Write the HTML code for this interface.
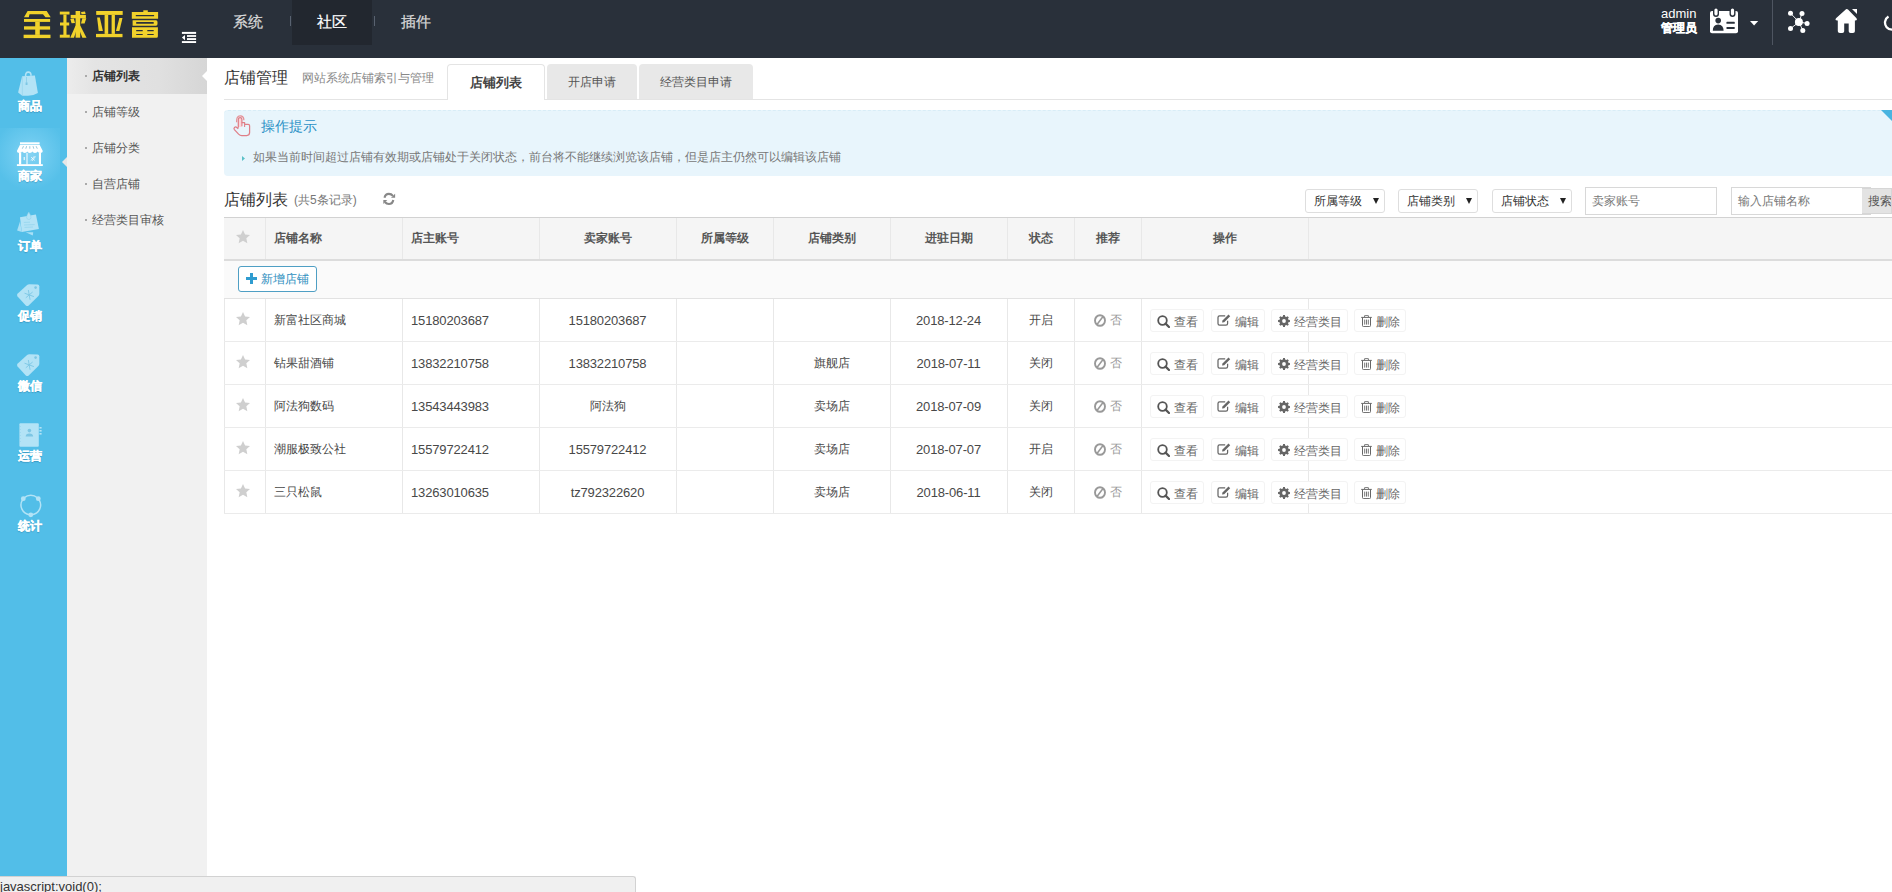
<!DOCTYPE html>
<html><head><meta charset="utf-8">
<style>
*{box-sizing:border-box;margin:0;padding:0}
html,body{width:1892px;height:892px;overflow:hidden;background:#fff;font-family:"Liberation Sans",sans-serif;font-size:12px;color:#333}
.a{position:absolute}
#hd{left:0;top:0;width:1892px;height:58px;background:#29303a}
#sb{left:0;top:58px;width:67px;height:834px;background:#52bee8}
#sm{left:67px;top:58px;width:140px;height:834px;background:#f1f1f1}
.nav{position:absolute;top:0;height:45px;line-height:44px;font-size:15px;color:#d8d8d8;text-align:center;-webkit-text-stroke:0.25px currentColor}
.sep{position:absolute;width:1px;height:10px;top:16px;background:#596270}
.sl{position:absolute;left:0;width:59px;text-align:center;font-size:12px;font-weight:bold;color:#fff;line-height:12px;-webkit-text-stroke:0.35px #fff;text-shadow:0 1px 1px rgba(0,60,100,.35)}
.ic{position:absolute}
.smi{position:absolute;left:0;width:140px;height:36px;line-height:36px;font-size:12px;color:#555;padding-left:25px}
.smi:before{content:"";position:absolute;left:18px;top:17px;width:2px;height:2px;background:#aaa}

.tab{position:absolute;top:64px;height:35px;line-height:36px;text-align:center;font-size:12px;color:#555;background:#e8e8e8;border-radius:4px 4px 0 0}
.sel{position:absolute;top:189px;width:80px;height:24px;border:1px solid #dedede;border-radius:3px;background:#fff;font-size:12px;line-height:22px;color:#333;padding-left:8px}
.sel i{position:absolute;left:67px;top:8px;width:0;height:0;border-left:3px solid transparent;border-right:3px solid transparent;border-top:6px solid #222}
.inp{position:absolute;top:187px;height:28px;border:1px solid #d8d8d8;background:#fff;font-size:12px;line-height:26px;color:#777;padding-left:6px}
.th{position:absolute;top:218px;height:41px;line-height:40px;font-size:12px;font-weight:bold;color:#555}
.vl{position:absolute;width:1px;background:#e8e8e8}
.td{position:absolute;height:43px;line-height:43px;font-size:12px;color:#484848;white-space:nowrap}
.rl{position:absolute;left:224px;width:1668px;height:1px;background:#ebebeb}
.btn{position:absolute;height:23px;border:1px solid #f3f3f3;border-radius:3px;background:#fff;font-size:12px;line-height:21px;color:#666;white-space:nowrap}
.num{font-size:13px;letter-spacing:-0.15px}
</style></head><body>
<div id="hd" class="a">
  <svg class="ic" style="left:0;top:0" width="170" height="45" viewBox="0 0 170 45"><g fill="#f1d22b">
    <path d="M27.6 10.9 H46.7 L50.7 17.3 H45.5 L43 14.3 H29.5 L28.8 17.3 H24Z"/>
    <rect x="24" y="19" width="26.1" height="2.9"/><rect x="35.2" y="21.9" width="4.6" height="13"/><rect x="24" y="26.3" width="26.1" height="3.3"/><rect x="23.6" y="34.7" width="26.9" height="3.4"/>
    <rect x="59.8" y="11.6" width="9.7" height="2.9"/><rect x="63.4" y="14.5" width="3.1" height="20.5"/><rect x="60" y="22.5" width="9.2" height="3"/><rect x="59.8" y="34.7" width="10" height="3"/>
    <path d="M75.6 11 H80.2 V37.7 H75.6Z"/><rect x="70.7" y="14.9" width="15.2" height="3.4"/>
    <path d="M81 12 L85 11.4 L85.6 14 L81.6 14.3Z"/><path d="M70.3 19 L73.8 18.6 L75 23 L71.6 23.3Z"/><path d="M82.3 18.3 H86.3 L84.6 23.6 H81Z"/>
    <path d="M75.6 25.5 L77.4 27.5 L74 37.7 H70.2Z"/><path d="M80.2 25.5 L86.5 37.7 H82.4 L78.5 28Z"/>
    <rect x="96.2" y="11" width="26.5" height="3.9"/><rect x="104.6" y="14.9" width="3.6" height="19"/><rect x="111.6" y="14.9" width="3.3" height="19"/>
    <path d="M97.1 17.5 H99.8 L102.9 30.9 H98.7Z"/><path d="M119.4 18.1 H122.5 L119.4 30.9 H116Z"/><rect x="96" y="33.9" width="26.5" height="3.3"/>
    <rect x="143.3" y="10.3" width="4.5" height="2.2"/>
    <path d="M131.8 12 H158.1 V18.7 H131.8Z M135.8 15 V16.2 H154.1 V15Z" fill-rule="evenodd"/>
    <path d="M132.6 20.2 H156 Q157.5 20.2 157.5 22 V24 Q157.5 25.7 156 25.7 H132.6Z M136.2 22.1 V23.8 H153.7 V22.1Z" fill-rule="evenodd"/>
    <path d="M132 27.2 H157.9 V36.2 Q157.9 37.7 156.4 37.7 H132Z M136.2 30.1 V31.2 H142.7 V30.1Z M147.3 30.1 V31.2 H153.7 V30.1Z M136.2 34.1 V35.1 H142.7 V34.1Z M147.3 34.1 V35.1 H153.7 V34.1Z" fill-rule="evenodd"/>
  </g></svg>
  <svg class="ic" style="left:176px;top:26px" width="26" height="22" viewBox="0 0 26 22"><g fill="#fff"><rect x="5.9" y="5.9" width="14.2" height="2"/><rect x="11" y="9.1" width="9.1" height="1.8"/><rect x="11" y="12.1" width="9.1" height="1.9"/><rect x="5.9" y="15.1" width="14.2" height="1.9"/><path d="M5.9 11.5 L9 9 V14.2Z"/></g></svg>
  <div class="nav" style="left:218px;width:60px">系统</div>
  <div class="sep" style="left:290px"></div>
  <div class="nav" style="left:292px;width:80px;background:#22272f;color:#fff">社区</div>
  <div class="sep" style="left:374px"></div>
  <div class="nav" style="left:386px;width:60px">插件</div>
  <div class="a" style="left:1661px;top:7px;font-size:13px;line-height:14px;color:#fff">admin</div>
  <div class="a" style="left:1661px;top:21px;font-size:12px;line-height:14px;color:#fff;font-weight:bold;-webkit-text-stroke:0.3px #fff">管理员</div>
  <svg class="ic" style="left:1708px;top:7px" width="32" height="28" viewBox="0 0 32 28">
    <rect x="2" y="4" width="28" height="22.2" rx="2" fill="#fff"/>
    <rect x="5" y="0.5" width="6" height="9.5" rx="3" fill="#29303a"/><rect x="6.4" y="1.4" width="3.2" height="7" rx="1.6" fill="#fff"/>
    <rect x="21.5" y="0.5" width="6" height="9.5" rx="3" fill="#29303a"/><rect x="22.9" y="1.4" width="3.2" height="7" rx="1.6" fill="#fff"/>
    <circle cx="10.2" cy="13.6" r="2.8" fill="#29303a"/><path d="M4.8 23.8 Q4.6 18.2 10.2 17.6 Q15.6 18.2 15.6 23.8Z" fill="#29303a"/>
    <rect x="18.4" y="14.8" width="8.4" height="2" rx="0.6" fill="#29303a"/><rect x="18.4" y="19.9" width="8.4" height="2" rx="0.6" fill="#29303a"/>
  </svg>
  <svg class="ic" style="left:1750px;top:21px" width="9" height="5" viewBox="0 0 9 5"><path d="M0 0 H8.2 L4.1 4.4Z" fill="#fff"/></svg>
  <div class="a" style="left:1772px;top:0;width:1px;height:45px;background:#4e5561"></div>
  <svg class="ic" style="left:1780px;top:5px" width="112" height="35" viewBox="0 0 112 35">
    <g stroke="#fff" stroke-width="0.9"><line x1="19" y1="17" x2="10.5" y2="8.3"/><line x1="19" y1="17" x2="22" y2="8.4"/><line x1="19" y1="17" x2="27.1" y2="18.4"/><line x1="19" y1="17" x2="10.5" y2="23.6"/><line x1="19" y1="17" x2="22.8" y2="25.5"/></g>
    <circle cx="18.9" cy="16.9" r="4" fill="#fff"/><circle cx="10.5" cy="8.3" r="2.5" fill="#fff"/><circle cx="22" cy="8.4" r="2.5" fill="#fff"/><circle cx="27.1" cy="18.4" r="2.5" fill="#fff"/><circle cx="10.5" cy="23.6" r="2.5" fill="#fff"/><circle cx="22.8" cy="25.5" r="2.5" fill="#fff"/>
    <path d="M66 4.3 Q67 3.5 68 4.5 L76.5 13.2 Q77.7 15.4 75.3 15.4 L74.9 15.4 V26.2 Q74.9 28 73 28 H70.6 Q68.7 28 68.7 26.2 V18.4 H64.2 V26.2 Q64.2 28 62.3 28 H59.8 Q57.8 28 57.8 26.2 V15.4 H57.2 Q54.6 15.4 56 13.2Z" fill="#fff"/>
    <path d="M72 4.1 H77 V8.9Z" fill="#fff"/>
    <path d="M108.5 11.6 A7 7 0 1 0 115.5 11.6" stroke="#fff" stroke-width="2.3" fill="none"/>
  </svg>
</div>

<div id="sb" class="a">
  <div class="a" style="left:0;top:70px;width:60px;height:62px;background:radial-gradient(ellipse 36px 36px at 30px 26px,#86d3f3 0%,#6ccaef 45%,#56c0e9 100%)"></div>
  <svg class="a" style="left:62px;top:99px" width="5" height="10" viewBox="0 0 5 10"><path d="M5 0 L0 5 L5 10Z" fill="#e6e6e6"/></svg>
</div>
<!-- sidebar icons and labels (absolute page coords) -->
<svg class="ic" style="left:12px;top:66px" width="32" height="34" viewBox="0 0 32 34">
  <path d="M13.6 10.2 Q13.4 6.1 16.3 6.1 Q19.2 6.1 19 9.8" stroke="#b3e3f6" stroke-width="1.6" fill="none"/>
  <path d="M10.1 10.3 L22.9 9.6 L25.9 26.9 Q21 29.8 16 29.8 H10.3 L6.1 26.6Z" fill="#b3e3f6"/>
  <line x1="10.3" y1="10.6" x2="10.3" y2="29.8" stroke="#8fd0ea" stroke-width="0.6"/>
  <line x1="14.5" y1="11" x2="14.5" y2="16.6" stroke="#7cc6e4" stroke-width="0.6"/><rect x="13.6" y="16.4" width="1.9" height="2.6" fill="#7cc6e4"/>
</svg>
<div class="sl" style="top:100px">商品</div>
<svg class="ic" style="left:10px;top:135px" width="40" height="35" viewBox="0 0 40 35">
  <rect x="10" y="7.3" width="19.6" height="1.9" fill="#fff"/>
  <path d="M10 9.8 H29.6 L32.8 16 Q32.8 17.9 30.2 17.9 Q28.2 17.9 27.6 16.6 Q27 17.9 25 17.9 Q23 17.9 22.4 16.6 Q21.8 17.9 19.8 17.9 Q17.8 17.9 17.3 16.6 Q16.7 17.9 14.7 17.9 Q12.7 17.9 12.1 16.6 Q11.5 17.9 9.5 17.9 Q6.9 17.9 6.9 16Z" fill="#fff"/>
  <g stroke="#7fb8d0" stroke-width="0.8"><line x1="13.5" y1="11.2" x2="12.3" y2="13.7"/><line x1="16.6" y1="11.2" x2="15.8" y2="13.7"/><line x1="19.8" y1="11.2" x2="19.8" y2="13.7"/><line x1="23" y1="11.2" x2="23.8" y2="13.7"/><line x1="26.1" y1="11.2" x2="27.3" y2="13.7"/></g>
  <rect x="9" y="17.5" width="2.2" height="12" fill="#fff"/><rect x="28.9" y="17.5" width="2.1" height="12" fill="#fff"/><rect x="16.5" y="18" width="1" height="11.5" fill="#fff"/>
  <rect x="13.7" y="22" width="1" height="3.1" fill="#fff"/>
  <g stroke="#fff" stroke-width="0.7"><line x1="21" y1="25.5" x2="24.5" y2="21"/><line x1="22" y1="26" x2="25.5" y2="21.5"/><line x1="21" y1="22" x2="24.8" y2="25.5"/></g>
  <rect x="6.9" y="29.2" width="25.9" height="1.8" fill="#fff"/>
</svg>
<div class="sl" style="top:170px;font-size:11.5px">商家</div>
<svg class="ic" style="left:10px;top:205px" width="36" height="35" viewBox="0 0 36 35">
  <path d="M7.1 25.5 L10 16.5 L11.8 27.1Z" fill="#a9e0f6"/><path d="M15.7 27.3 H23.2 L22.8 30.6Z" fill="#a9e0f6"/>
  <path d="M10 12.2 L25.9 9.4 L28.9 24 L11.8 27.1Z" fill="#b3e3f6"/>
  <path d="M18.8 7 Q16.5 10.5 16.6 12.3 Q16.8 14.5 18.8 14.5 Q20.9 14.5 21 12.3 Q21 10.5 18.8 7Z" fill="#b3e3f6" stroke="#8ccfe9" stroke-width="0.5"/>
  <g stroke="#8fd2ec" stroke-width="0.7"><line x1="13.8" y1="17.4" x2="20" y2="17.2"/><line x1="14" y1="20" x2="24.7" y2="19.6"/><line x1="14.5" y1="22.4" x2="23" y2="22"/></g>
</svg>
<div class="sl" style="top:240px">订单</div>
<svg class="ic" style="left:10px;top:278px" width="36" height="35" viewBox="0 0 36 35">
  <path d="M7.5 15.8 Q6.5 17.1 7.6 18.4 L15.8 27.4 Q17.3 28.7 18.7 27.4 L28.4 17.9 Q29.3 17 29.3 15.8 V8.3 Q29.3 6.6 27.6 6.5 L19.3 6.2 Q18 6.2 17.1 7Z" fill="#b3e3f6"/>
  <circle cx="25.6" cy="9.6" r="1.3" fill="#7cc6e4"/>
  <g stroke="#7cc6e4" stroke-width="0.9"><line x1="18.33" y1="11.98" x2="20.07" y2="21.82"/><line x1="14.50" y1="15.19" x2="23.90" y2="18.61"/><line x1="15.75" y1="19.79" x2="22.65" y2="14.01"/></g>
</svg>
<div class="sl" style="top:310px">促销</div>
<svg class="ic" style="left:10px;top:348px" width="36" height="35" viewBox="0 0 36 35">
  <path d="M7.5 15.8 Q6.5 17.1 7.6 18.4 L15.8 27.4 Q17.3 28.7 18.7 27.4 L28.4 17.9 Q29.3 17 29.3 15.8 V8.3 Q29.3 6.6 27.6 6.5 L19.3 6.2 Q18 6.2 17.1 7Z" fill="#b3e3f6"/>
  <circle cx="25.6" cy="9.6" r="1.3" fill="#7cc6e4"/>
  <g stroke="#7cc6e4" stroke-width="0.9"><line x1="18.33" y1="11.98" x2="20.07" y2="21.82"/><line x1="14.50" y1="15.19" x2="23.90" y2="18.61"/><line x1="15.75" y1="19.79" x2="22.65" y2="14.01"/></g>
</svg>
<div class="sl" style="top:380px">微信</div>
<svg class="ic" style="left:18px;top:422px" width="26" height="26" viewBox="0 0 26 26">
  <rect x="1.4" y="1.2" width="19.4" height="23.6" rx="1" fill="#b3e3f6"/>
  <g fill="#b3e3f6"><rect x="21.4" y="5" width="2.2" height="1.6"/><rect x="21.4" y="8" width="2.2" height="1.6"/><rect x="21.4" y="11" width="2.2" height="1.6"/></g>
  <g fill="#8fd2ec"><rect x="1.4" y="4" width="1.2" height="0.8"/><rect x="1.4" y="7" width="1.2" height="0.8"/><rect x="1.4" y="10" width="1.2" height="0.8"/><rect x="1.4" y="13" width="1.2" height="0.8"/><rect x="1.4" y="16" width="1.2" height="0.8"/><rect x="1.4" y="19" width="1.2" height="0.8"/></g>
  <circle cx="11.4" cy="8.6" r="1.8" fill="#7cc6e4"/><path d="M7.6 14.6 Q7.8 11.4 11.4 11.4 Q15 11.4 15.2 14.6Z" fill="#7cc6e4"/>
</svg>
<div class="sl" style="top:450px">运营</div>
<svg class="ic" style="left:20px;top:494px" width="22" height="24" viewBox="0 0 22 24"><path d="M4.24 3.72 A9.8 9.8 0 0 1 17.36 3.72" stroke="#b3e3f6" stroke-width="1.5" fill="none"/><path d="M19.11 5.81 A9.8 9.8 0 0 1 12.16 20.70" stroke="#b3e3f6" stroke-width="1.5" fill="none"/><path d="M9.44 20.70 A9.8 9.8 0 0 1 2.49 5.81" stroke="#b3e3f6" stroke-width="1.5" fill="none"/><circle cx="3.29" cy="4.70" r="2.4" fill="#b3e3f6"/><circle cx="18.31" cy="4.70" r="2.4" fill="#b3e3f6"/><circle cx="10.80" cy="20.80" r="2.4" fill="#b3e3f6"/></svg>
<div class="sl" style="top:520px">统计</div>

<div id="sm" class="a">
  <div class="smi" style="top:0;background:linear-gradient(90deg,#ececec 0%,#e4e4e4 20%,#e0e0e0 65%,#d6d6d6 100%);color:#333;font-weight:bold">店铺列表</div>
  <svg class="a" style="left:135px;top:13px" width="5" height="10" viewBox="0 0 5 10"><path d="M5 0 L0 5 L5 10Z" fill="#fff"/></svg>
  <div class="smi" style="top:36px">店铺等级</div>
  <div class="smi" style="top:72px">店铺分类</div>
  <div class="smi" style="top:108px">自营店铺</div>
  <div class="smi" style="top:144px">经营类目审核</div>
</div>

<div id="main">
  <div class="a" style="left:224px;top:69px;font-size:16px;line-height:18px;color:#333">店铺管理</div>
  <div class="a" style="left:302px;top:71px;font-size:12px;line-height:14px;color:#888">网站系统店铺索引与管理</div>
  <div class="a" style="left:224px;top:99px;width:1668px;height:1px;background:#e4e4e4"></div>
  <div class="tab" style="left:447px;width:98px;background:#fff;border:1px solid #e4e4e4;border-bottom:none;font-weight:bold;color:#444;height:36px;font-size:13px">店铺列表</div>
  <div class="tab" style="left:547px;width:90px">开店申请</div>
  <div class="tab" style="left:639px;width:114px">经营类目申请</div>

  <div class="a" style="left:224px;top:110px;width:1668px;height:66px;background:#e8f5fc;border-top:1px dashed #d8edf7;border-radius:4px 0 0 4px"></div>
  <svg class="a" style="left:1881px;top:110px" width="11" height="11" viewBox="0 0 11 11"><path d="M0 0 H11 V11Z" fill="#49b4e0"/></svg>
  <svg class="a" style="left:226px;top:110px" width="30" height="30" viewBox="0 0 30 30">
    <path d="M12.3 9.4 Q12.3 7.6 14.1 7.6 Q15.9 7.6 15.9 9.4 V17 H12.3Z" fill="#fbd6da"/>
    <path d="M10.6 12.2 Q10.2 5.9 14.1 5.9 Q17.9 5.9 17.9 10.3" stroke="#e58d94" stroke-width="1.2" fill="none"/>
    <path d="M12.3 17.8 V9.4 Q12.3 7.6 14.1 7.6 Q15.9 7.6 15.9 9.4 V12.6 H18.6 V14.3 H22.2 Q23.6 14.3 23.6 15.8 V22.6 Q23.6 25.5 20.6 25.5 H15.8 Q14 25.5 12.6 24.1 L8.4 19.6 Q7.5 18.4 8.5 17.4 Q9.7 16.5 10.8 17.5 L12.3 18.9" stroke="#df7f88" stroke-width="1.25" fill="none" stroke-linejoin="round"/>
    <path d="M15.9 12.6 V16.2 M18.6 14.3 V17" stroke="#df7f88" stroke-width="1.1"/>
  </svg>
  <div class="a" style="left:261px;top:118px;font-size:14px;line-height:16px;color:#2b91c6">操作提示</div>
  <svg class="a" style="left:242px;top:156px" width="3" height="5" viewBox="0 0 3 5"><path d="M0 0 L3 2.5 L0 5Z" fill="#5bc0c8"/></svg>
  <div class="a" style="left:253px;top:150px;font-size:12px;line-height:14px;color:#777">如果当前时间超过店铺有效期或店铺处于关闭状态，前台将不能继续浏览该店铺，但是店主仍然可以编辑该店铺</div>

  <div class="a" style="left:224px;top:191px;font-size:16px;line-height:18px;color:#333">店铺列表</div>
  <div class="a" style="left:294px;top:193px;font-size:12px;line-height:14px;color:#777">(共5条记录)</div>
  <svg class="a" style="left:376px;top:186px" width="28" height="26" viewBox="0 0 28 26">
    <path d="M8.5 11.8 Q9.2 7.9 12.9 7.9 Q15.4 7.9 16.9 9.9" stroke="#888" stroke-width="2.1" fill="none"/><path d="M19.1 7.7 V11.8 H15Z" fill="#888"/>
    <path d="M17.3 14 Q16.6 18 12.9 18 Q10.4 18 8.9 16" stroke="#888" stroke-width="2.1" fill="none"/><path d="M7.3 14 H11.3 L7.3 18Z" fill="#888"/>
  </svg>

  <div class="sel" style="left:1305px">所属等级<i></i></div>
  <div class="sel" style="left:1398px">店铺类别<i></i></div>
  <div class="sel" style="left:1492px">店铺状态<i></i></div>
  <div class="inp" style="left:1585px;width:132px">卖家账号</div>
  <div class="inp" style="left:1731px;width:140px">输入店铺名称</div>
  <div class="a" style="left:1862px;top:188px;width:30px;height:26px;background:#e3e3e3;border:1px solid #d6d6d6;border-left:none;font-size:12px;line-height:24px;color:#555;padding-left:6px;white-space:nowrap;overflow:hidden">搜索</div>

  <div class="a" style="left:224px;top:217px;width:1668px;height:1px;background:#d2d2d2"></div>
  <div class="a" style="left:224px;top:218px;width:1668px;height:41px;background:#f5f5f5"></div>
  <div class="a" style="left:224px;top:259px;width:1668px;height:2px;background:#dcdcdc"></div>
  <div class="a" style="left:224px;top:261px;width:1668px;height:37px;background:#fafafa"></div>
  <div class="a" style="left:224px;top:298px;width:1668px;height:1px;background:#e2e2e2"></div>
  <div class="vl" style="left:265px;top:218px;height:41px"></div>
  <div class="vl" style="left:402px;top:218px;height:41px"></div>
  <div class="vl" style="left:539px;top:218px;height:41px"></div>
  <div class="vl" style="left:676px;top:218px;height:41px"></div>
  <div class="vl" style="left:773px;top:218px;height:41px"></div>
  <div class="vl" style="left:890px;top:218px;height:41px"></div>
  <div class="vl" style="left:1007px;top:218px;height:41px"></div>
  <div class="vl" style="left:1074px;top:218px;height:41px"></div>
  <div class="vl" style="left:1141px;top:218px;height:41px"></div>
  <div class="vl" style="left:1308px;top:218px;height:41px"></div>
  <div class="vl" style="left:224px;top:299px;height:215px"></div>
  <div class="vl" style="left:265px;top:299px;height:215px"></div>
  <div class="vl" style="left:402px;top:299px;height:215px"></div>
  <div class="vl" style="left:539px;top:299px;height:215px"></div>
  <div class="vl" style="left:676px;top:299px;height:215px"></div>
  <div class="vl" style="left:773px;top:299px;height:215px"></div>
  <div class="vl" style="left:890px;top:299px;height:215px"></div>
  <div class="vl" style="left:1007px;top:299px;height:215px"></div>
  <div class="vl" style="left:1074px;top:299px;height:215px"></div>
  <div class="vl" style="left:1141px;top:299px;height:215px"></div>
  <div class="vl" style="left:1308px;top:299px;height:215px"></div>
  <svg class="a" style="left:235px;top:229px" width="16" height="16" viewBox="0 0 24 24"><path d="M12 1.5 L15.1 8.2 L22.5 9 L17 14 L18.5 21.5 L12 17.8 L5.5 21.5 L7 14 L1.5 9 L8.9 8.2Z" fill="#cfcfcf"/></svg>
  <div class="th" style="left:274px">店铺名称</div>
  <div class="th" style="left:411px">店主账号</div>
  <div class="th" style="left:539px;width:137px;text-align:center">卖家账号</div>
  <div class="th" style="left:676px;width:97px;text-align:center">所属等级</div>
  <div class="th" style="left:773px;width:117px;text-align:center">店铺类别</div>
  <div class="th" style="left:890px;width:117px;text-align:center">进驻日期</div>
  <div class="th" style="left:1007px;width:67px;text-align:center">状态</div>
  <div class="th" style="left:1074px;width:67px;text-align:center">推荐</div>
  <div class="th" style="left:1141px;width:167px;text-align:center">操作</div>
  <div class="rl" style="top:341px"></div>
  <svg class="a" style="left:235px;top:311px" width="16" height="16" viewBox="0 0 24 24"><path d="M12 1.5 L15.1 8.2 L22.5 9 L17 14 L18.5 21.5 L12 17.8 L5.5 21.5 L7 14 L1.5 9 L8.9 8.2Z" fill="#cfcfcf"/></svg>
  <div class="td" style="left:274px;top:299px">新富社区商城</div>
  <div class="td" style="left:411px;top:299px"><span class="num">15180203687</span></div>
  <div class="td" style="left:539px;width:137px;text-align:center;top:299px"><span class="num">15180203687</span></div>
  <div class="td" style="left:773px;width:117px;text-align:center;top:299px"></div>
  <div class="td" style="left:890px;width:117px;text-align:center;top:299px"><span class="num">2018-12-24</span></div>
  <div class="td" style="left:1007px;width:67px;text-align:center;top:299px">开启</div>
  <svg class="a" style="left:1094px;top:314px" width="12" height="13" viewBox="0 0 12 13"><ellipse cx="6" cy="6.5" rx="5" ry="5.3" stroke="#999" stroke-width="1.9" fill="none"/><line x1="3.2" y1="10.2" x2="8.8" y2="2.8" stroke="#999" stroke-width="1.6"/></svg>
  <div class="td" style="left:1110px;top:299px;color:#999">否</div>
  <div class="btn" style="left:1150px;top:309px;width:54px"></div>
  <svg class="a" style="left:1157px;top:315px" width="13" height="13" viewBox="0 0 13 13"><circle cx="5.5" cy="5.5" r="4.3" stroke="#555" stroke-width="1.8" fill="none"/><line x1="8.6" y1="8.6" x2="12" y2="12" stroke="#555" stroke-width="2.2" stroke-linecap="round"/></svg>
  <div class="td" style="left:1174px;top:301px;color:#666">查看</div>
  <div class="btn" style="left:1211px;top:309px;width:54px"></div>
  <svg class="a" style="left:1217px;top:314px" width="14" height="13" viewBox="0 0 14 13"><path d="M8.2 1.8 H2.6 Q1 1.8 1 3.4 V9.6 Q1 11.2 2.6 11.2 H9 Q10.6 11.2 10.6 9.6 V6.8" stroke="#666" stroke-width="1.25" fill="none"/><path d="M5 8.5 L5.5 6.5 L11.5 0.5 L13.2 2.2 L7.2 8.2Z" fill="#666"/></svg>
  <div class="td" style="left:1235px;top:301px;color:#666">编辑</div>
  <div class="btn" style="left:1271px;top:309px;width:77px"></div>
  <svg class="a" style="left:1278px;top:315px" width="12" height="12" viewBox="0 0 12 12"><path d="M10.46 4.87 L11.93 5.11 L11.93 6.89 L10.46 7.13 L9.95 8.36 L10.82 9.57 L9.57 10.82 L8.36 9.95 L7.13 10.46 L6.89 11.93 L5.11 11.93 L4.87 10.46 L3.64 9.95 L2.43 10.82 L1.18 9.57 L2.05 8.36 L1.54 7.13 L0.07 6.89 L0.07 5.11 L1.54 4.87 L2.05 3.64 L1.18 2.43 L2.43 1.18 L3.64 2.05 L4.87 1.54 L5.11 0.07 L6.89 0.07 L7.13 1.54 L8.36 2.05 L9.57 1.18 L10.82 2.43 L9.95 3.64Z" fill="#666"/><circle cx="6" cy="6" r="1.9" fill="#fff"/></svg>
  <div class="td" style="left:1294px;top:301px;color:#666">经营类目</div>
  <div class="btn" style="left:1354px;top:309px;width:52px"></div>
  <svg class="a" style="left:1361px;top:315px" width="11" height="12" viewBox="0 0 11 12"><path d="M3.6 2 V0.9 Q3.6 0.4 4.1 0.4 H6.9 Q7.4 0.4 7.4 0.9 V2" stroke="#666" stroke-width="0.9" fill="none"/><path d="M0.2 2.4 H10.8" stroke="#666" stroke-width="1"/><path d="M1.5 2.6 V10.6 Q1.5 11.6 2.5 11.6 H8.5 Q9.5 11.6 9.5 10.6 V2.6" stroke="#666" stroke-width="1" fill="none"/><path d="M3.7 4.6 V9.6 M5.5 4.6 V9.6 M7.3 4.6 V9.6" stroke="#666" stroke-width="0.9"/></svg>
  <div class="td" style="left:1376px;top:301px;color:#666">删除</div>
  <div class="rl" style="top:384px"></div>
  <svg class="a" style="left:235px;top:354px" width="16" height="16" viewBox="0 0 24 24"><path d="M12 1.5 L15.1 8.2 L22.5 9 L17 14 L18.5 21.5 L12 17.8 L5.5 21.5 L7 14 L1.5 9 L8.9 8.2Z" fill="#cfcfcf"/></svg>
  <div class="td" style="left:274px;top:342px">钻果甜酒铺</div>
  <div class="td" style="left:411px;top:342px"><span class="num">13832210758</span></div>
  <div class="td" style="left:539px;width:137px;text-align:center;top:342px"><span class="num">13832210758</span></div>
  <div class="td" style="left:773px;width:117px;text-align:center;top:342px">旗舰店</div>
  <div class="td" style="left:890px;width:117px;text-align:center;top:342px"><span class="num">2018-07-11</span></div>
  <div class="td" style="left:1007px;width:67px;text-align:center;top:342px">关闭</div>
  <svg class="a" style="left:1094px;top:357px" width="12" height="13" viewBox="0 0 12 13"><ellipse cx="6" cy="6.5" rx="5" ry="5.3" stroke="#999" stroke-width="1.9" fill="none"/><line x1="3.2" y1="10.2" x2="8.8" y2="2.8" stroke="#999" stroke-width="1.6"/></svg>
  <div class="td" style="left:1110px;top:342px;color:#999">否</div>
  <div class="btn" style="left:1150px;top:352px;width:54px"></div>
  <svg class="a" style="left:1157px;top:358px" width="13" height="13" viewBox="0 0 13 13"><circle cx="5.5" cy="5.5" r="4.3" stroke="#555" stroke-width="1.8" fill="none"/><line x1="8.6" y1="8.6" x2="12" y2="12" stroke="#555" stroke-width="2.2" stroke-linecap="round"/></svg>
  <div class="td" style="left:1174px;top:344px;color:#666">查看</div>
  <div class="btn" style="left:1211px;top:352px;width:54px"></div>
  <svg class="a" style="left:1217px;top:357px" width="14" height="13" viewBox="0 0 14 13"><path d="M8.2 1.8 H2.6 Q1 1.8 1 3.4 V9.6 Q1 11.2 2.6 11.2 H9 Q10.6 11.2 10.6 9.6 V6.8" stroke="#666" stroke-width="1.25" fill="none"/><path d="M5 8.5 L5.5 6.5 L11.5 0.5 L13.2 2.2 L7.2 8.2Z" fill="#666"/></svg>
  <div class="td" style="left:1235px;top:344px;color:#666">编辑</div>
  <div class="btn" style="left:1271px;top:352px;width:77px"></div>
  <svg class="a" style="left:1278px;top:358px" width="12" height="12" viewBox="0 0 12 12"><path d="M10.46 4.87 L11.93 5.11 L11.93 6.89 L10.46 7.13 L9.95 8.36 L10.82 9.57 L9.57 10.82 L8.36 9.95 L7.13 10.46 L6.89 11.93 L5.11 11.93 L4.87 10.46 L3.64 9.95 L2.43 10.82 L1.18 9.57 L2.05 8.36 L1.54 7.13 L0.07 6.89 L0.07 5.11 L1.54 4.87 L2.05 3.64 L1.18 2.43 L2.43 1.18 L3.64 2.05 L4.87 1.54 L5.11 0.07 L6.89 0.07 L7.13 1.54 L8.36 2.05 L9.57 1.18 L10.82 2.43 L9.95 3.64Z" fill="#666"/><circle cx="6" cy="6" r="1.9" fill="#fff"/></svg>
  <div class="td" style="left:1294px;top:344px;color:#666">经营类目</div>
  <div class="btn" style="left:1354px;top:352px;width:52px"></div>
  <svg class="a" style="left:1361px;top:358px" width="11" height="12" viewBox="0 0 11 12"><path d="M3.6 2 V0.9 Q3.6 0.4 4.1 0.4 H6.9 Q7.4 0.4 7.4 0.9 V2" stroke="#666" stroke-width="0.9" fill="none"/><path d="M0.2 2.4 H10.8" stroke="#666" stroke-width="1"/><path d="M1.5 2.6 V10.6 Q1.5 11.6 2.5 11.6 H8.5 Q9.5 11.6 9.5 10.6 V2.6" stroke="#666" stroke-width="1" fill="none"/><path d="M3.7 4.6 V9.6 M5.5 4.6 V9.6 M7.3 4.6 V9.6" stroke="#666" stroke-width="0.9"/></svg>
  <div class="td" style="left:1376px;top:344px;color:#666">删除</div>
  <div class="rl" style="top:427px"></div>
  <svg class="a" style="left:235px;top:397px" width="16" height="16" viewBox="0 0 24 24"><path d="M12 1.5 L15.1 8.2 L22.5 9 L17 14 L18.5 21.5 L12 17.8 L5.5 21.5 L7 14 L1.5 9 L8.9 8.2Z" fill="#cfcfcf"/></svg>
  <div class="td" style="left:274px;top:385px">阿法狗数码</div>
  <div class="td" style="left:411px;top:385px"><span class="num">13543443983</span></div>
  <div class="td" style="left:539px;width:137px;text-align:center;top:385px">阿法狗</div>
  <div class="td" style="left:773px;width:117px;text-align:center;top:385px">卖场店</div>
  <div class="td" style="left:890px;width:117px;text-align:center;top:385px"><span class="num">2018-07-09</span></div>
  <div class="td" style="left:1007px;width:67px;text-align:center;top:385px">关闭</div>
  <svg class="a" style="left:1094px;top:400px" width="12" height="13" viewBox="0 0 12 13"><ellipse cx="6" cy="6.5" rx="5" ry="5.3" stroke="#999" stroke-width="1.9" fill="none"/><line x1="3.2" y1="10.2" x2="8.8" y2="2.8" stroke="#999" stroke-width="1.6"/></svg>
  <div class="td" style="left:1110px;top:385px;color:#999">否</div>
  <div class="btn" style="left:1150px;top:395px;width:54px"></div>
  <svg class="a" style="left:1157px;top:401px" width="13" height="13" viewBox="0 0 13 13"><circle cx="5.5" cy="5.5" r="4.3" stroke="#555" stroke-width="1.8" fill="none"/><line x1="8.6" y1="8.6" x2="12" y2="12" stroke="#555" stroke-width="2.2" stroke-linecap="round"/></svg>
  <div class="td" style="left:1174px;top:387px;color:#666">查看</div>
  <div class="btn" style="left:1211px;top:395px;width:54px"></div>
  <svg class="a" style="left:1217px;top:400px" width="14" height="13" viewBox="0 0 14 13"><path d="M8.2 1.8 H2.6 Q1 1.8 1 3.4 V9.6 Q1 11.2 2.6 11.2 H9 Q10.6 11.2 10.6 9.6 V6.8" stroke="#666" stroke-width="1.25" fill="none"/><path d="M5 8.5 L5.5 6.5 L11.5 0.5 L13.2 2.2 L7.2 8.2Z" fill="#666"/></svg>
  <div class="td" style="left:1235px;top:387px;color:#666">编辑</div>
  <div class="btn" style="left:1271px;top:395px;width:77px"></div>
  <svg class="a" style="left:1278px;top:401px" width="12" height="12" viewBox="0 0 12 12"><path d="M10.46 4.87 L11.93 5.11 L11.93 6.89 L10.46 7.13 L9.95 8.36 L10.82 9.57 L9.57 10.82 L8.36 9.95 L7.13 10.46 L6.89 11.93 L5.11 11.93 L4.87 10.46 L3.64 9.95 L2.43 10.82 L1.18 9.57 L2.05 8.36 L1.54 7.13 L0.07 6.89 L0.07 5.11 L1.54 4.87 L2.05 3.64 L1.18 2.43 L2.43 1.18 L3.64 2.05 L4.87 1.54 L5.11 0.07 L6.89 0.07 L7.13 1.54 L8.36 2.05 L9.57 1.18 L10.82 2.43 L9.95 3.64Z" fill="#666"/><circle cx="6" cy="6" r="1.9" fill="#fff"/></svg>
  <div class="td" style="left:1294px;top:387px;color:#666">经营类目</div>
  <div class="btn" style="left:1354px;top:395px;width:52px"></div>
  <svg class="a" style="left:1361px;top:401px" width="11" height="12" viewBox="0 0 11 12"><path d="M3.6 2 V0.9 Q3.6 0.4 4.1 0.4 H6.9 Q7.4 0.4 7.4 0.9 V2" stroke="#666" stroke-width="0.9" fill="none"/><path d="M0.2 2.4 H10.8" stroke="#666" stroke-width="1"/><path d="M1.5 2.6 V10.6 Q1.5 11.6 2.5 11.6 H8.5 Q9.5 11.6 9.5 10.6 V2.6" stroke="#666" stroke-width="1" fill="none"/><path d="M3.7 4.6 V9.6 M5.5 4.6 V9.6 M7.3 4.6 V9.6" stroke="#666" stroke-width="0.9"/></svg>
  <div class="td" style="left:1376px;top:387px;color:#666">删除</div>
  <div class="rl" style="top:470px"></div>
  <svg class="a" style="left:235px;top:440px" width="16" height="16" viewBox="0 0 24 24"><path d="M12 1.5 L15.1 8.2 L22.5 9 L17 14 L18.5 21.5 L12 17.8 L5.5 21.5 L7 14 L1.5 9 L8.9 8.2Z" fill="#cfcfcf"/></svg>
  <div class="td" style="left:274px;top:428px">潮服极致公社</div>
  <div class="td" style="left:411px;top:428px"><span class="num">15579722412</span></div>
  <div class="td" style="left:539px;width:137px;text-align:center;top:428px"><span class="num">15579722412</span></div>
  <div class="td" style="left:773px;width:117px;text-align:center;top:428px">卖场店</div>
  <div class="td" style="left:890px;width:117px;text-align:center;top:428px"><span class="num">2018-07-07</span></div>
  <div class="td" style="left:1007px;width:67px;text-align:center;top:428px">开启</div>
  <svg class="a" style="left:1094px;top:443px" width="12" height="13" viewBox="0 0 12 13"><ellipse cx="6" cy="6.5" rx="5" ry="5.3" stroke="#999" stroke-width="1.9" fill="none"/><line x1="3.2" y1="10.2" x2="8.8" y2="2.8" stroke="#999" stroke-width="1.6"/></svg>
  <div class="td" style="left:1110px;top:428px;color:#999">否</div>
  <div class="btn" style="left:1150px;top:438px;width:54px"></div>
  <svg class="a" style="left:1157px;top:444px" width="13" height="13" viewBox="0 0 13 13"><circle cx="5.5" cy="5.5" r="4.3" stroke="#555" stroke-width="1.8" fill="none"/><line x1="8.6" y1="8.6" x2="12" y2="12" stroke="#555" stroke-width="2.2" stroke-linecap="round"/></svg>
  <div class="td" style="left:1174px;top:430px;color:#666">查看</div>
  <div class="btn" style="left:1211px;top:438px;width:54px"></div>
  <svg class="a" style="left:1217px;top:443px" width="14" height="13" viewBox="0 0 14 13"><path d="M8.2 1.8 H2.6 Q1 1.8 1 3.4 V9.6 Q1 11.2 2.6 11.2 H9 Q10.6 11.2 10.6 9.6 V6.8" stroke="#666" stroke-width="1.25" fill="none"/><path d="M5 8.5 L5.5 6.5 L11.5 0.5 L13.2 2.2 L7.2 8.2Z" fill="#666"/></svg>
  <div class="td" style="left:1235px;top:430px;color:#666">编辑</div>
  <div class="btn" style="left:1271px;top:438px;width:77px"></div>
  <svg class="a" style="left:1278px;top:444px" width="12" height="12" viewBox="0 0 12 12"><path d="M10.46 4.87 L11.93 5.11 L11.93 6.89 L10.46 7.13 L9.95 8.36 L10.82 9.57 L9.57 10.82 L8.36 9.95 L7.13 10.46 L6.89 11.93 L5.11 11.93 L4.87 10.46 L3.64 9.95 L2.43 10.82 L1.18 9.57 L2.05 8.36 L1.54 7.13 L0.07 6.89 L0.07 5.11 L1.54 4.87 L2.05 3.64 L1.18 2.43 L2.43 1.18 L3.64 2.05 L4.87 1.54 L5.11 0.07 L6.89 0.07 L7.13 1.54 L8.36 2.05 L9.57 1.18 L10.82 2.43 L9.95 3.64Z" fill="#666"/><circle cx="6" cy="6" r="1.9" fill="#fff"/></svg>
  <div class="td" style="left:1294px;top:430px;color:#666">经营类目</div>
  <div class="btn" style="left:1354px;top:438px;width:52px"></div>
  <svg class="a" style="left:1361px;top:444px" width="11" height="12" viewBox="0 0 11 12"><path d="M3.6 2 V0.9 Q3.6 0.4 4.1 0.4 H6.9 Q7.4 0.4 7.4 0.9 V2" stroke="#666" stroke-width="0.9" fill="none"/><path d="M0.2 2.4 H10.8" stroke="#666" stroke-width="1"/><path d="M1.5 2.6 V10.6 Q1.5 11.6 2.5 11.6 H8.5 Q9.5 11.6 9.5 10.6 V2.6" stroke="#666" stroke-width="1" fill="none"/><path d="M3.7 4.6 V9.6 M5.5 4.6 V9.6 M7.3 4.6 V9.6" stroke="#666" stroke-width="0.9"/></svg>
  <div class="td" style="left:1376px;top:430px;color:#666">删除</div>
  <div class="rl" style="top:513px"></div>
  <svg class="a" style="left:235px;top:483px" width="16" height="16" viewBox="0 0 24 24"><path d="M12 1.5 L15.1 8.2 L22.5 9 L17 14 L18.5 21.5 L12 17.8 L5.5 21.5 L7 14 L1.5 9 L8.9 8.2Z" fill="#cfcfcf"/></svg>
  <div class="td" style="left:274px;top:471px">三只松鼠</div>
  <div class="td" style="left:411px;top:471px"><span class="num">13263010635</span></div>
  <div class="td" style="left:539px;width:137px;text-align:center;top:471px"><span class="num">tz792322620</span></div>
  <div class="td" style="left:773px;width:117px;text-align:center;top:471px">卖场店</div>
  <div class="td" style="left:890px;width:117px;text-align:center;top:471px"><span class="num">2018-06-11</span></div>
  <div class="td" style="left:1007px;width:67px;text-align:center;top:471px">关闭</div>
  <svg class="a" style="left:1094px;top:486px" width="12" height="13" viewBox="0 0 12 13"><ellipse cx="6" cy="6.5" rx="5" ry="5.3" stroke="#999" stroke-width="1.9" fill="none"/><line x1="3.2" y1="10.2" x2="8.8" y2="2.8" stroke="#999" stroke-width="1.6"/></svg>
  <div class="td" style="left:1110px;top:471px;color:#999">否</div>
  <div class="btn" style="left:1150px;top:481px;width:54px"></div>
  <svg class="a" style="left:1157px;top:487px" width="13" height="13" viewBox="0 0 13 13"><circle cx="5.5" cy="5.5" r="4.3" stroke="#555" stroke-width="1.8" fill="none"/><line x1="8.6" y1="8.6" x2="12" y2="12" stroke="#555" stroke-width="2.2" stroke-linecap="round"/></svg>
  <div class="td" style="left:1174px;top:473px;color:#666">查看</div>
  <div class="btn" style="left:1211px;top:481px;width:54px"></div>
  <svg class="a" style="left:1217px;top:486px" width="14" height="13" viewBox="0 0 14 13"><path d="M8.2 1.8 H2.6 Q1 1.8 1 3.4 V9.6 Q1 11.2 2.6 11.2 H9 Q10.6 11.2 10.6 9.6 V6.8" stroke="#666" stroke-width="1.25" fill="none"/><path d="M5 8.5 L5.5 6.5 L11.5 0.5 L13.2 2.2 L7.2 8.2Z" fill="#666"/></svg>
  <div class="td" style="left:1235px;top:473px;color:#666">编辑</div>
  <div class="btn" style="left:1271px;top:481px;width:77px"></div>
  <svg class="a" style="left:1278px;top:487px" width="12" height="12" viewBox="0 0 12 12"><path d="M10.46 4.87 L11.93 5.11 L11.93 6.89 L10.46 7.13 L9.95 8.36 L10.82 9.57 L9.57 10.82 L8.36 9.95 L7.13 10.46 L6.89 11.93 L5.11 11.93 L4.87 10.46 L3.64 9.95 L2.43 10.82 L1.18 9.57 L2.05 8.36 L1.54 7.13 L0.07 6.89 L0.07 5.11 L1.54 4.87 L2.05 3.64 L1.18 2.43 L2.43 1.18 L3.64 2.05 L4.87 1.54 L5.11 0.07 L6.89 0.07 L7.13 1.54 L8.36 2.05 L9.57 1.18 L10.82 2.43 L9.95 3.64Z" fill="#666"/><circle cx="6" cy="6" r="1.9" fill="#fff"/></svg>
  <div class="td" style="left:1294px;top:473px;color:#666">经营类目</div>
  <div class="btn" style="left:1354px;top:481px;width:52px"></div>
  <svg class="a" style="left:1361px;top:487px" width="11" height="12" viewBox="0 0 11 12"><path d="M3.6 2 V0.9 Q3.6 0.4 4.1 0.4 H6.9 Q7.4 0.4 7.4 0.9 V2" stroke="#666" stroke-width="0.9" fill="none"/><path d="M0.2 2.4 H10.8" stroke="#666" stroke-width="1"/><path d="M1.5 2.6 V10.6 Q1.5 11.6 2.5 11.6 H8.5 Q9.5 11.6 9.5 10.6 V2.6" stroke="#666" stroke-width="1" fill="none"/><path d="M3.7 4.6 V9.6 M5.5 4.6 V9.6 M7.3 4.6 V9.6" stroke="#666" stroke-width="0.9"/></svg>
  <div class="td" style="left:1376px;top:473px;color:#666">删除</div>
  <div class="a" style="left:238px;top:266px;width:79px;height:26px;border:1px solid #4f9fc4;border-radius:3px;background:#fff"></div>
  <svg class="a" style="left:246px;top:273px" width="11" height="11" viewBox="0 0 11 11"><path d="M4 0 H7 V4 H11 V7 H7 V11 H4 V7 H0 V4 H4Z" fill="#2f9cd0"/></svg>
  <div class="a" style="left:261px;top:272px;font-size:12px;line-height:14px;color:#2f8fc0">新增店铺</div>

  <div class="a" style="left:0;top:876px;width:636px;height:16px;background:#f0f0f0;border-top:1px solid #d2d2d2;border-right:1px solid #d2d2d2;border-radius:0 3px 0 0"></div>
  <div class="a" style="left:0;top:879px;font-size:13px;line-height:15px;color:#333">javascript:void(0);</div>
</div>
</body></html>
